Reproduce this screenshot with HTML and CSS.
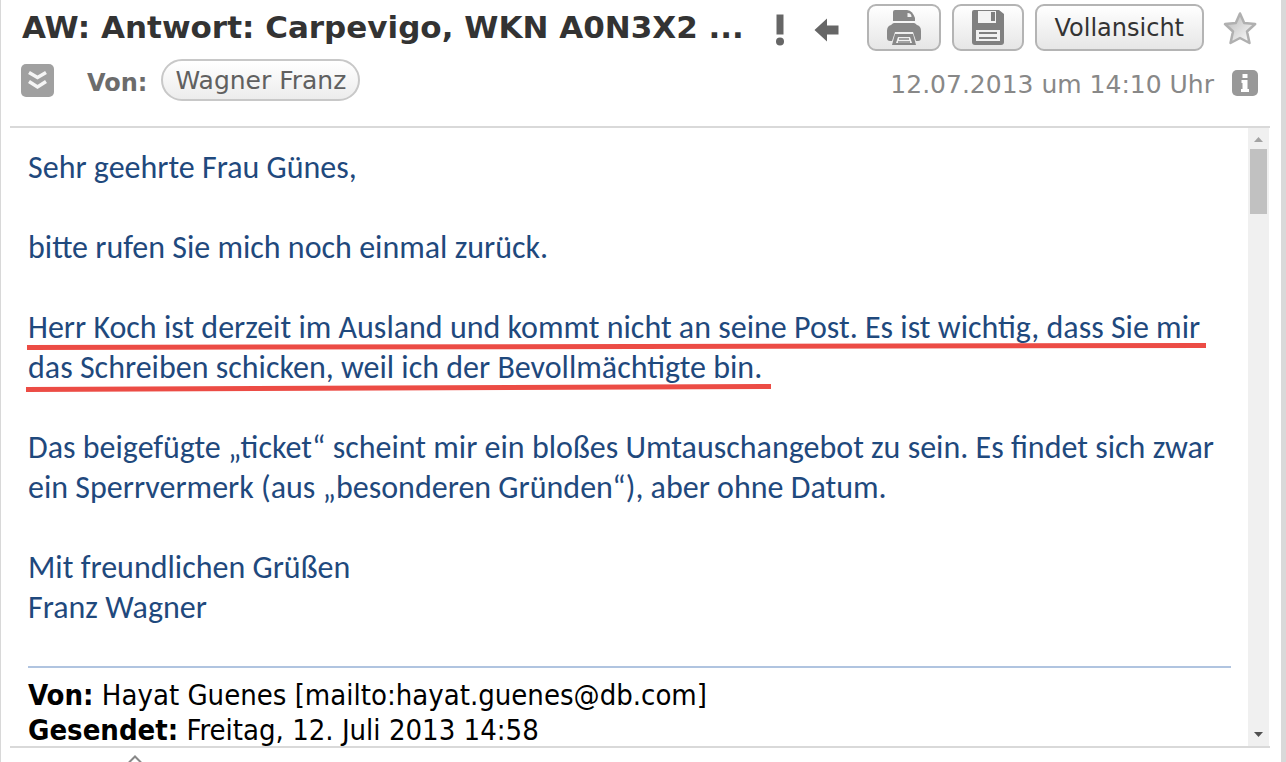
FILE: index.html
```html
<!DOCTYPE html>
<html lang="de">
<head>
<meta charset="utf-8">
<title>AW: Antwort: Carpevigo</title>
<link rel="stylesheet" href="styles.css">
</head>
<body>
<main class="mail">
  <header class="head">
    <div class="row subject-row">
      <h1 class="subject">AW: Antwort: Carpevigo, WKN A0N3X2 ...</h1>
      <div class="flags">
        <svg class="flag" width="14" height="34" viewBox="0 0 14 34" role="img" aria-label="Wichtig"><path d="M3.500 1.500h7v20h-7z" fill="#666"/><circle cx="7" cy="28.500" r="4" fill="#666"/></svg>
        <svg class="flag" width="26" height="24" viewBox="0 0 26 24" role="img" aria-label="Beantwortet"><path d="M0.500 12 13 0.500V7.500h11.500v9H13v7z" fill="#666"/></svg>
      </div>
      <div class="actions">
        <button class="btn" type="button" aria-label="Drucken">
          <svg width="36" height="36" viewBox="0 0 36 36"><path d="M7 2q0-2 2-2h12q3 0 5 2.500T29 8v3H7z" fill="#888"/><path d="M21.500 3v4h4q0-4-4-4z" fill="#f4f4f4"/><path d="M8 13h20q1 0 3 2 4 1 4 6v7q0 3-3 3h-2l-3-9H9l-3 9H4q-3 0-3-3v-7q0-5 4-6 2-2 3-2z" fill="#888"/><path d="M9 24h18l3 11H6z" fill="#888"/><path d="M12 27h12l2 6H10z" fill="#f1f1f1"/><path d="M13 29h10M12 32h12" stroke="#888" stroke-width="1.500"/></svg>
        </button>
        <button class="btn" type="button" aria-label="Speichern">
          <svg width="34" height="36" viewBox="0 0 34 36"><path d="M3 0h25l5 4v28q0 3-3 3H4q-3 0-3-3V2q0-2 2-2z" fill="#808080"/><path d="M7 1h18v12H7z" fill="#f4f4f4"/><path d="M20 2h4v9h-4z" fill="#808080"/><path d="M5 20h24v11H5z" fill="#f1f1f1"/><path d="M8 23h18M8 28h18" stroke="#808080" stroke-width="2"/></svg>
        </button>
        <button class="btn btn-text" type="button">Vollansicht</button>
      </div>
      <button class="star" type="button" aria-label="Markieren">
        <svg width="34" height="34" viewBox="0 0 34 34"><defs><linearGradient id="s" x1="0" y1="0" x2="1" y2="1"><stop offset="0.200" stop-color="#c4c4c4"/><stop offset="0.800" stop-color="#f2f2f2"/></linearGradient></defs><path d="M17 2.500l4.200 9.500 11 1-8.200 7.500 2.500 11.500-9.500-5-9.500 5L10 20.500 2 13l10.800-1z" fill="url(#s)" stroke="#b0b0b0" stroke-width="2.500" stroke-linejoin="round"/></svg>
      </button>
    </div>
    <div class="row sender-row">
      <button class="expand" type="button" aria-label="Details anzeigen">
        <svg width="33" height="33" viewBox="0 0 33 33"><rect width="33" height="33" rx="5" fill="#a0a0a0"/><path d="M8 8.500l8.500 5 8.500-5M8 17.500l8.500 5.500 8.500-5.500" fill="none" stroke="#f5f5f5" stroke-width="3.500"/></svg>
      </button>
      <span class="label">Von:</span>
      <button class="person" type="button">Wagner Franz</button>
      <time class="date" datetime="2013-07-12T14:10">12.07.2013 um 14:10 Uhr</time>
      <button class="info" type="button" aria-label="Information">
        <svg width="26" height="26" viewBox="0 0 26 26"><rect width="26" height="26" rx="5" fill="#999"/><path d="M10.500 4h5v4h-5zM9.500 10h6v9h1.500v3H9v-3h1.500v-6h-1z" fill="#fff"/></svg>
      </button>
    </div>
  </header>
  <section class="pane">
    <article class="content">
      <p>Sehr geehrte Frau Günes,</p>
      <p>bitte rufen Sie mich noch einmal zurück.</p>
      <p class="marked">Herr Koch ist derzeit im Ausland und kommt nicht an seine Post. Es ist wichtig, dass Sie mir<br>das Schreiben schicken, weil ich der Bevollmächtigte bin.
        <svg class="strokes" aria-hidden="true"><path d="M-1 39.500 1178 37.500M-2 81.500 743 78.500" stroke="#ec4c45" stroke-width="5"/></svg>
      </p>
      <p>Das beigefügte „ticket“ scheint mir ein bloßes Umtauschangebot zu sein. Es findet sich zwar<br>ein Sperrvermerk (aus „besonderen Gründen“), aber ohne Datum.</p>
      <p class="closing">Mit freundlichen Grüßen<br>Franz Wagner</p>
      <div class="quote">
        <b>Von:</b> Hayat Guenes [mailto:hayat.guenes@db.com]<br>
        <b>Gesendet:</b> Freitag, 12. Juli 2013 14:58
      </div>
    </article>
    <div class="scrollbar" aria-hidden="true">
      <svg class="arrow" width="9" height="5" viewBox="0 0 9 5"><path d="M0 5 4.500 0 9 5z" fill="#a3a3a3"/></svg>
      <div class="thumb"></div>
      <svg class="arrow" width="9" height="5" viewBox="0 0 9 5"><path d="M0 0h9L4.500 5z" fill="#505050"/></svg>
    </div>
  </section>
  <footer class="foot">
    <svg width="14" height="7" viewBox="0 0 14 7"><path d="M1 7.500 7 1.500l6 6" fill="none" stroke="#888" stroke-width="2"/></svg>
  </footer>
</main>
</body>
</html>
```
FILE: styles.css
```css
* { box-sizing: border-box; }
body { margin: 0; background: #fff; font-family: "DejaVu Sans", sans-serif; }
button { font: inherit; padding: 0; border: 0; background: none; cursor: pointer; }
svg { display: block; flex: none; }
.mail {
  display: flex;
  flex-direction: column;
  height: 100vh;
  padding: 4px 11px 0 9px;
  border-left: 1px solid #d8d8d8;
  border-right: 5px solid #d9d9d9;
  overflow: hidden;
}
.head { padding: 0 0 25px 12px; }
.row { display: flex; align-items: center; }
.subject-row { padding-right: 13px; }
.subject {
  flex: 1;
  min-width: 0;
  margin: 0;
  padding-bottom: 2px;
  overflow: hidden;
  font-size: 31px;
  line-height: 44px;
  white-space: nowrap;
  color: #333;
}
.flags { display: flex; align-items: center; gap: 27px; padding: 5px 27px 0 0; }
.actions { display: flex; gap: 11px; }
.btn {
  display: flex;
  align-items: center;
  justify-content: center;
  height: 47px;
  padding: 0 17px;
  border: 2px solid #b4b4b4;
  border-radius: 9px;
  background: linear-gradient(#fff, #e6e6e6);
  font-size: 24px;
  color: #333;
}
.btn-text { padding: 0 18px; }
.star { margin-left: 19px; }
.sender-row { padding: 8px 12px 0 0; }
.expand { margin-left: -1px; }
.label { margin: 5px 14px 0 33px; font-size: 24px; font-weight: bold; color: #6c6c6c; }
.person {
  height: 42px;
  padding: 1px 12px 0;
  border: 2px solid #c8c8c8;
  border-radius: 21px;
  background: linear-gradient(#fff, #ececec);
  font-size: 25px;
  line-height: 37px;
  color: #606060;
}
.date { margin: 10px 18px 0 auto; font-size: 25px; line-height: 28px; color: #888; }
.info { margin-top: 6px; }
.pane {
  display: flex;
  flex: 1;
  min-height: 0;
  border-top: 2px solid #d9d9d9;
  border-bottom: 2px solid #d9d9d9;
}
.content {
  flex: 1;
  min-width: 0;
  padding: 20px 17px 0 18px;
  overflow: hidden;
  font: 32px/40px Carlito, Calibri, Lato, sans-serif;
  color: #1f497d;
}
.content p { margin: 0 0 40px; }
.content .closing { margin-bottom: 38px; }
.marked { position: relative; }
.strokes { position: absolute; top: 0; left: 0; width: 100%; height: 100%; overflow: visible; }
.quote {
  padding-top: 10px;
  border-top: 2px solid #b0c4e0;
  font: 29px/35px "DejaVu Sans Condensed", "DejaVu Sans", sans-serif;
  color: #000;
}
.scrollbar {
  display: flex;
  flex-direction: column;
  align-items: center;
  width: 21px;
  margin-right: 1px;
  padding: 9px 0;
  background: #f0f0f0;
}
.thumb { width: 17px; height: 65px; margin: 7px 0 auto; background: #c1c1c1; }
.foot { height: 14px; padding: 7px 0 0 118px; }
```
